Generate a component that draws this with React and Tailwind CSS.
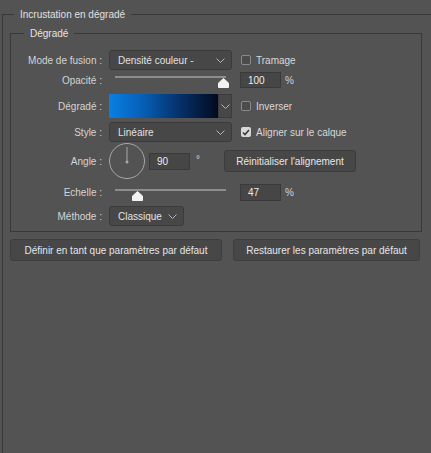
import React from 'react';

const Chevron = () => (
  <svg width="9" height="5" viewBox="0 0 9 5" className="shrink-0">
    <polyline points="0.5,0.5 4.5,4.5 8.5,0.5" fill="none" stroke="#b5b5b5" strokeWidth="1" />
  </svg>
);

const Select = ({ value, width }) => (
  <div
    className={`flex items-center justify-between h-[20px] pl-[8px] pr-[6px] bg-[#474747] border border-[#3b3b3b] rounded-[3px] text-[#e2e2e2] ${width}`}
  >
    <span>{value}</span>
    <Chevron />
  </div>
);

const Check = ({ checked, label }) => (
  <div className="flex items-center gap-[5px] text-[#d8d8d8]">
    {checked ? (
      <div className="w-[10px] h-[10px] rounded-[2px] bg-[#d8d8d8] flex items-center justify-center">
        <svg width="8" height="7" viewBox="0 0 8 7">
          <polyline points="1,3.5 3,5.5 7,1" fill="none" stroke="#3a3a3a" strokeWidth="1.6" />
        </svg>
      </div>
    ) : (
      <div className="w-[10px] h-[10px] rounded-[2px] border border-[#8a8a8a] bg-[#4c4c4c]" />
    )}
    <span>{label}</span>
  </div>
);

const Thumb = () => (
  <svg width="11" height="10" viewBox="0 0 11 10">
    <path d="M5.5 0.5 L10.5 5 L10.5 9.5 L0.5 9.5 L0.5 5 Z" fill="#f2f2f2" stroke="#f2f2f2" strokeLinejoin="round" />
  </svg>
);

const Slider = ({ pos, trackTop, thumbTop }) => (
  <div className="relative w-[123px] h-full">
    <div className={`mx-[6px] h-[2px] bg-[#8d8d8d] ${trackTop}`} />
    <div className={`absolute ${thumbTop}`} style={{ left: pos - 5.5 }}>
      <Thumb />
    </div>
  </div>
);

const NumBox = ({ value, h }) => (
  <div className={`w-[41px] ${h} flex items-center pl-[7px] bg-[#464646] border border-[#3a3a3a] text-[#ececec]`}>
    {value}
  </div>
);

const Row = ({ label, h, mt, children }) => (
  <div className={`flex items-center ${h} ${mt}`}>
    <div className="w-[91px] text-right text-[#d4d4d4] whitespace-nowrap">{label}</div>
    <div className="ml-[7px] flex items-center h-full">{children}</div>
  </div>
);

export default function App() {
  return (
    <div className="w-[431px] h-[453px] overflow-hidden bg-[#535353] text-[10px] leading-[13px] text-[#d8d8d8] font-['Liberation_Sans',Arial,sans-serif]">
      <fieldset className="ml-[2px] mt-[8px] min-h-[460px] border-t border-l border-[#393939]">
        <legend className="ml-[11px] px-[6px] text-[#e0e0e0]">Incrustation en dégradé</legend>

        <fieldset className="ml-[7px] mt-[6px] w-[412px] border border-[#393939]">
          <legend className="ml-[13px] px-[6px] text-[#e4e4e4]">Dégradé</legend>
          <div className="pt-[10px] pb-[5px]">
            <Row label="Mode de fusion :" h="h-[20px]" mt="mt-0">
              <Select value="Densité couleur -" width="w-[123px]" />
              <div className="ml-[9px]">
                <Check label="Tramage" />
              </div>
            </Row>

            <Row label="Opacité :" h="h-[16px]" mt="mt-[2px]">
              <Slider pos={114} trackTop="mt-[4px]" thumbTop="top-[6px]" />
              <div className="ml-[8px]">
                <NumBox value="100" h="h-[16px]" />
              </div>
              <span className="ml-[4px] text-[#d4d4d4]">%</span>
            </Row>

            <Row label="Dégradé :" h="h-[24px]" mt="mt-[6px]">
              <div className="flex h-[24px] w-[123px]">
                <div className="w-[109px] h-full bg-[linear-gradient(to_right,#0a7fe2_0%,#0660b8_30%,#05306a_65%,#020a1e_100%)]" />
                <div className="flex-1 h-full flex items-center justify-center bg-[#474747] border border-[#3b3b3b]">
                  <Chevron />
                </div>
              </div>
              <div className="ml-[9px]">
                <Check label="Inverser" />
              </div>
            </Row>

            <Row label="Style :" h="h-[20px]" mt="mt-[4px]">
              <Select value="Linéaire" width="w-[123px]" />
              <div className="ml-[9px]">
                <Check checked label="Aligner sur le calque" />
              </div>
            </Row>

            <Row label="Angle :" h="h-[36px]" mt="mt-[1px]">
              <svg width="36" height="36" viewBox="0 0 36 36" className="shrink-0">
                <circle cx="18" cy="18" r="17.5" fill="none" stroke="#a8a8a8" strokeWidth="1" />
                <line x1="18" y1="19" x2="18" y2="4" stroke="#a8a8a8" strokeWidth="1" />
                <circle cx="18" cy="19" r="1.5" fill="#a8a8a8" />
              </svg>
              <div className="ml-[4px]">
                <NumBox value="90" h="h-[17px]" />
              </div>
              <span className="ml-[6px] mb-[3px] text-[#d4d4d4]">°</span>
              <button className="ml-[24px] w-[132px] h-[22px] bg-[#474747] border border-[#3c3c3c] rounded-[3px] text-[#e6e6e6]">
                Réinitialiser l'alignement
              </button>
            </Row>

            <Row label="Echelle :" h="h-[18px]" mt="mt-[4px]">
              <Slider pos={28} trackTop="mt-[6px]" thumbTop="top-[8px]" />
              <div className="ml-[8px]">
                <NumBox value="47" h="h-[17px]" />
              </div>
              <span className="ml-[4px] text-[#d4d4d4]">%</span>
            </Row>

            <Row label="Méthode :" h="h-[20px]" mt="mt-[5px]">
              <Select value="Classique" width="w-[75px]" />
            </Row>
          </div>
        </fieldset>

        <div className="flex ml-[7px] mt-[7px] gap-[11px]">
          <button className="w-[212px] h-[22px] bg-[#474747] border border-[#3e3e3e] rounded-[3px] text-[#e6e6e6]">
            Définir en tant que paramètres par défaut
          </button>
          <button className="w-[187px] h-[22px] bg-[#474747] border border-[#3e3e3e] rounded-[3px] text-[#e6e6e6]">
            Restaurer les paramètres par défaut
          </button>
        </div>
      </fieldset>
    </div>
  );
}
